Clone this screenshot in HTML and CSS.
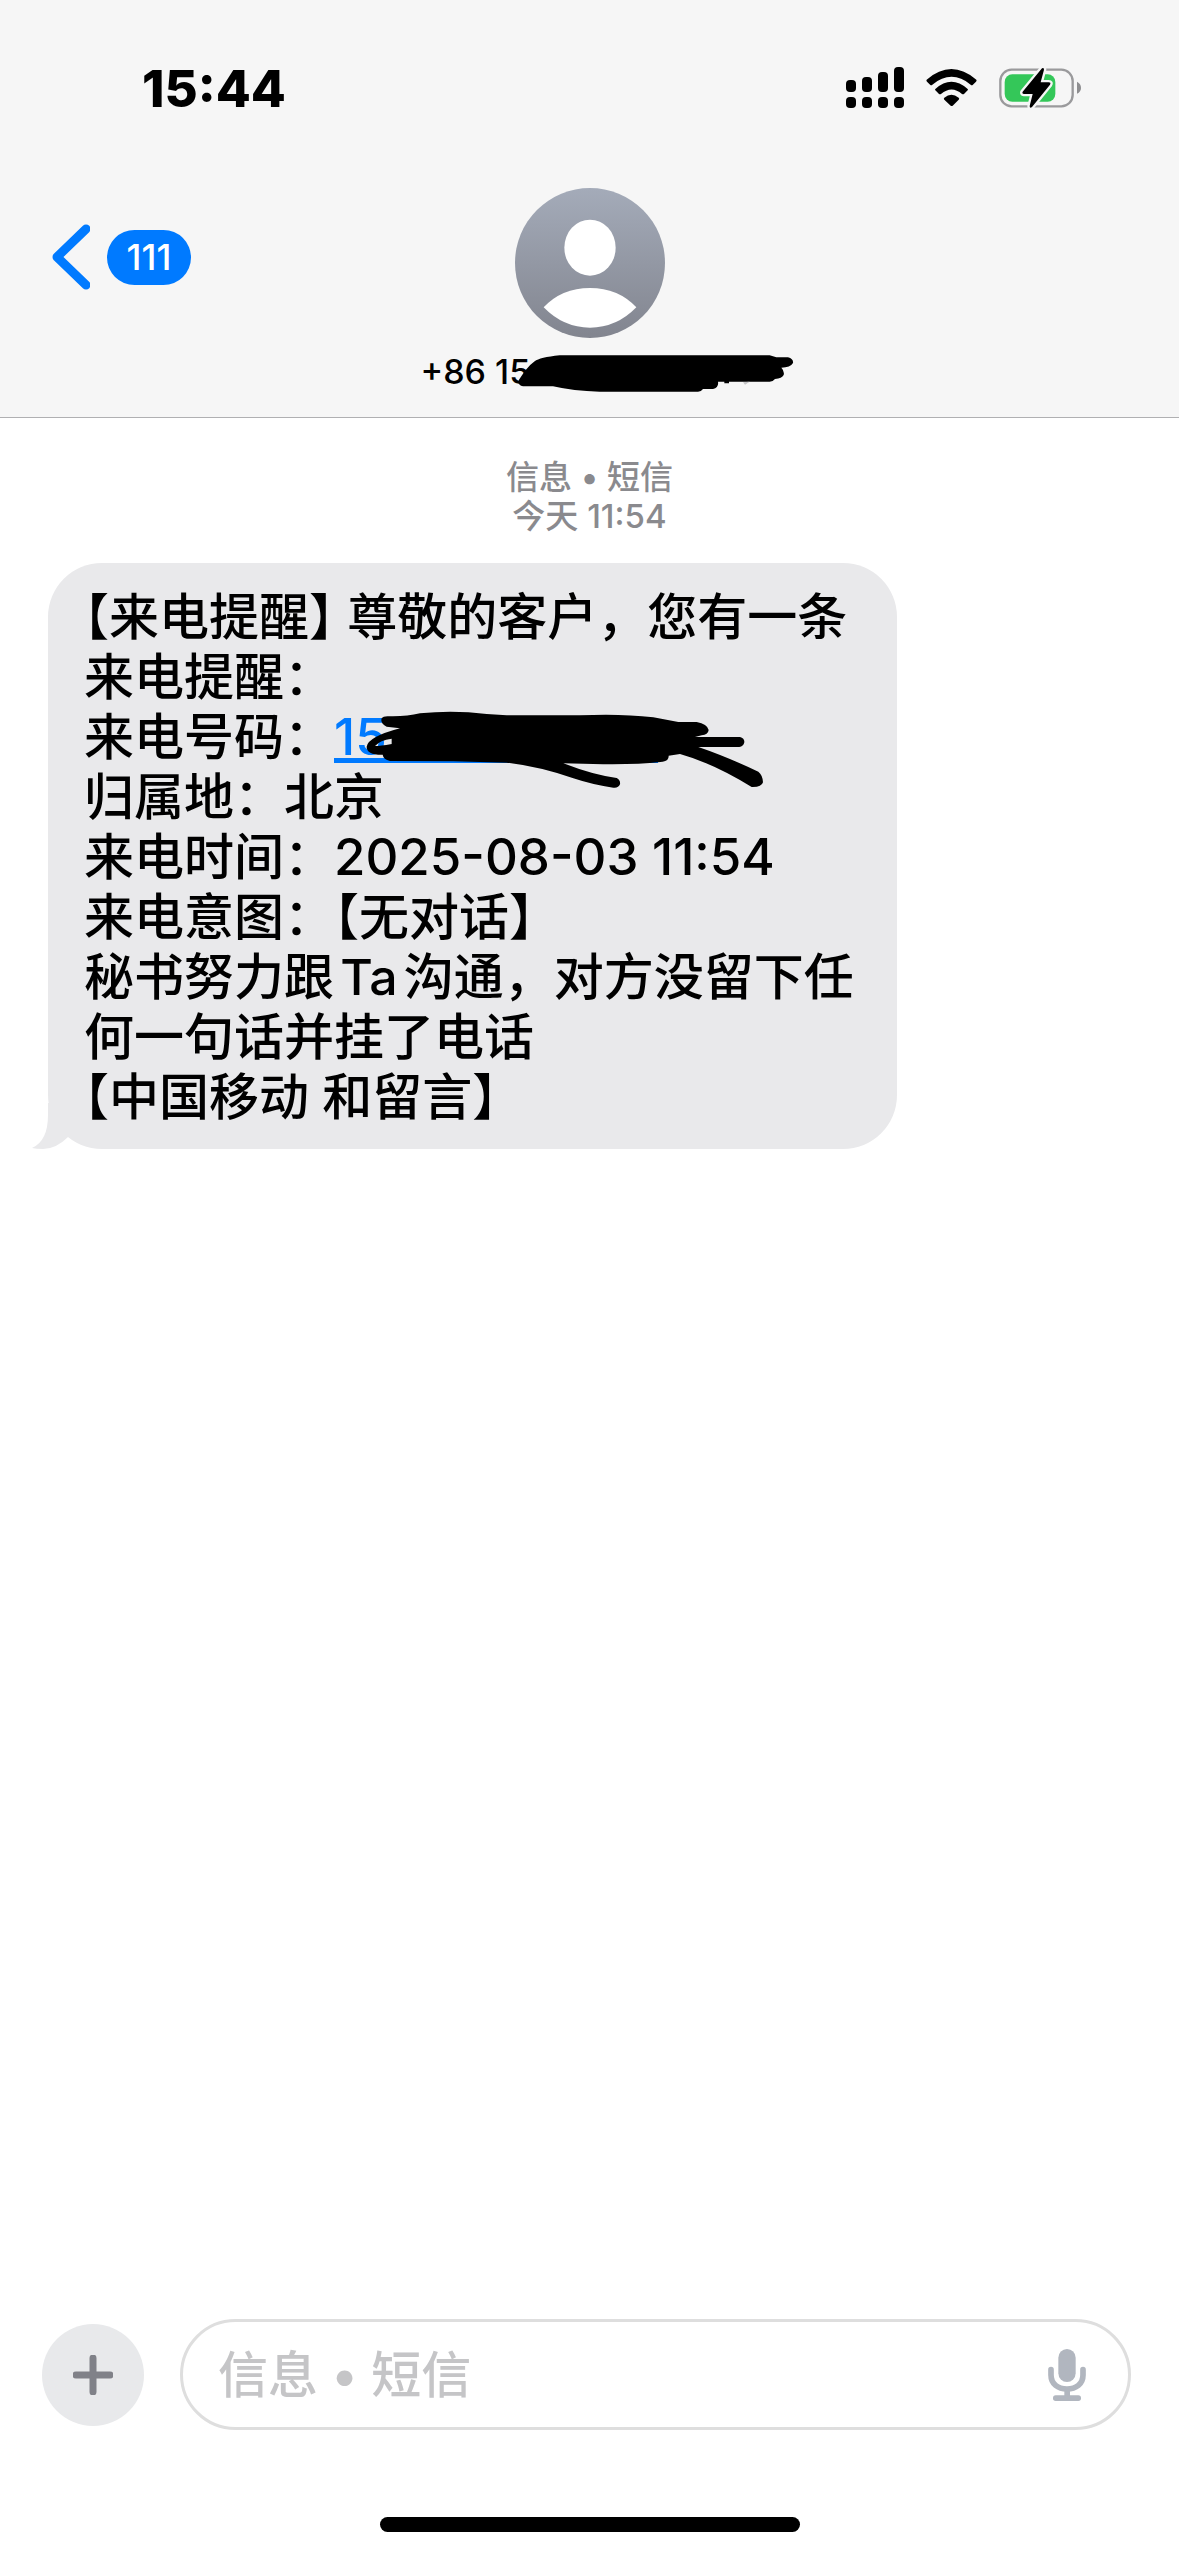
FILE: index.html
```html
<!DOCTYPE html>
<html lang="zh-CN">
<head>
<meta charset="utf-8">
<meta name="viewport" content="width=device-width, initial-scale=1">
<title>信息</title>
<link rel="stylesheet" href="styles.css">
</head>
<body>
<header class="top">
  <div class="status">
    <time class="clock">15:44</time>
    <div class="status-icons">
      <svg width="58" height="42" viewBox="0 0 58 42" aria-hidden="true">
        <rect x="0" y="13" width="10" height="12" rx="4"/><rect x="16" y="10" width="10" height="15" rx="4"/>
        <rect x="32" y="5" width="10" height="20" rx="4"/><rect x="48" y="0" width="10" height="25" rx="4"/>
        <rect x="0" y="30" width="10" height="11" rx="4"/><rect x="16" y="30" width="10" height="11" rx="4"/>
        <rect x="32" y="30" width="10" height="11" rx="4"/><rect x="48" y="30" width="10" height="11" rx="4"/>
      </svg>
      <svg class="wifi" width="51" height="38" viewBox="0 0 153 114" aria-hidden="true">
        <path d="M2 32Q0 35 3 38L13 48Q16 50 19 47Q77 0 134 47Q137 50 140 48L150 38Q153 35 151 32Q76-32 2 32Z"/>
        <path d="M28 60Q26 62 28 64L39 75Q42 77 45 75Q77 48 108 75Q111 77 114 75L125 64Q127 62 125 60Q76 17 28 60Z"/>
        <path d="M55 86Q52 89 55 92L74 110Q77 112 80 110L98 92Q101 89 98 86Q76 68 55 86Z"/>
      </svg>
      <svg width="82" height="42" viewBox="0 0 246 126" aria-hidden="true">
        <rect x="4" y="8" width="217" height="110" rx="34" fill="none" stroke="#9a9a9c" stroke-width="7"/>
        <path d="M234 44Q246 50 246 62Q246 74 234 80Z" fill="#8e8e90"/>
        <rect x="17" y="22" width="152" height="82" rx="23" fill="#34c759"/>
        <path d="M129 4L71 74Q68 80 75 81H101L92 117Q92 125 99 120L153 53Q157 46 149 46H125L135 8Q135 0 129 4Z" stroke="#f6f6f6" stroke-width="14" stroke-linejoin="round"/>
        <path d="M129 4L71 74Q68 80 75 81H101L92 117Q92 125 99 120L153 53Q157 46 149 46H125L135 8Q135 0 129 4Z"/>
      </svg>
    </div>
  </div>
  <nav class="nav">
    <button class="back" type="button" aria-label="返回">
      <svg width="38" height="66" viewBox="0 0 38 66" aria-hidden="true"><path d="M34 5L5 33L34 61" fill="none" stroke="#007aff" stroke-width="9" stroke-linecap="round" stroke-linejoin="round"/></svg>
      <span class="count">111</span>
    </button>
    <div class="contact">
      <svg width="150" height="150" viewBox="0 0 450 450" aria-hidden="true">
        <defs><linearGradient id="shade" x1="0" y1="0" x2="0" y2="1"><stop offset="0" stop-color="#a4abb9"/><stop offset="1" stop-color="#82858f"/></linearGradient></defs>
        <circle cx="225" cy="225" r="225" fill="url(#shade)"/>
        <ellipse cx="225" cy="179" rx="77" ry="84" fill="#fff"/>
        <path d="M86 358Q140 300 225 300T364 358Q305 419 225 419T86 358Z" fill="#fff"/>
      </svg>
      <div class="number">+86 15
        <svg class="number-mark" width="284" height="40" viewBox="340 550 852 120" aria-hidden="true"><path d="M358 630L375 605Q390 585 405 575Q420 563 480 557H1110L1130 563H1165Q1182 568 1180 580Q1172 594 1145 594Q1155 604 1152 616Q1147 627 1126 628Q1120 636 1110 636H988V641H974V636H955Q958 655 940 658H910Q905 666 895 666H600Q520 664 460 650H370Q352 645 358 630Z"/><path d="M1030 638L1050 636L1036 645Z" fill="#c4c4c6"/></svg>
      </div>
    </div>
  </nav>
</header>

<main class="thread">
  <p class="meta">信息 • 短信<br>今天 11:54</p>
  <div class="bubble">
    <svg class="tail" width="36" height="46" viewBox="0 0 36 46" aria-hidden="true"><path d="M16 0V12Q16 38 0 45Q4 46 11 46Q24 46 36 34V0Z"/></svg>
    <p>【来电提醒<span class="half">】</span> 尊敬的客户，您有一条来电提醒：<br>来电号码：<a class="phone latin" href="#">15<svg class="phone-mark" width="400" height="80" viewBox="1035 480 1200 240" aria-hidden="true"><path fill-rule="evenodd" d="M1085 505Q1090 497 1110 499Q1160 500 1200 490Q1300 480 1400 492L1460 496H1680Q1800 490 1900 502L1975 516H2030Q2062 522 2066 540Q2064 555 2045 556L2025 561H2160Q2174 565 2173 577Q2170 590 2158 591H2035Q2120 620 2215 665Q2228 675 2229 697Q2225 712 2195 711Q2080 640 1980 612L1946 617Q1947 632 1928 635Q1850 645 1720 642L1630 640Q1720 675 1790 684Q1802 690 1800 703Q1795 715 1780 713Q1720 705 1660 685Q1560 650 1460 638L1300 634L1110 633Q1090 628 1088 614Q1040 615 1040 590Q1045 560 1140 535L1100 530Q1080 520 1085 505ZM1065 588Q1080 570 1115 566V582Q1080 588 1065 588Z"/></svg></a><br>归属地：北京<br>来电时间：<span class="latin">2025-08-03 11:54</span><br>来电意图：【无对话】<br>秘书努力跟Ta沟通，对方没留下任何一句话并挂了电话<br>【中国移动 和留言】</p>
  </div>
</main>

<footer class="bottom">
  <form class="composer">
    <button class="add" type="button" aria-label="添加">
      <svg width="40" height="40" viewBox="0 0 40 40" aria-hidden="true"><path d="M20 3V37M3 20H37" stroke="#808188" stroke-width="7" stroke-linecap="round"/></svg>
    </button>
    <div class="field">
      <input type="text" placeholder="信息 • 短信" aria-label="信息 • 短信">
      <button class="mic" type="button" aria-label="听写">
        <svg width="38" height="52" viewBox="0 0 114 156" aria-hidden="true"><g fill="#b1b6bf"><rect x="31" y="0" width="52" height="99" rx="26"/><rect x="15" y="139" width="84" height="17" rx="8"/><rect x="49" y="118" width="17" height="30"/></g><path d="M9 62V78C9 105 30 120 57 120S105 105 105 78V62" fill="none" stroke="#b1b6bf" stroke-width="17" stroke-linecap="round"/></svg>
      </button>
    </div>
  </form>
  <div class="home"></div>
</footer>
</body>
</html>
```

FILE: styles.css
```css
* { box-sizing: border-box; }

body {
  margin: 0;
  min-height: 100vh;
  display: flex;
  flex-direction: column;
  background: #fff;
  color: #000;
  font-family: Inter, "Noto Sans CJK SC", sans-serif;
  font-weight: 500;
}

button {
  padding: 0;
  border: 0;
  background: none;
  font: inherit;
  cursor: pointer;
}

svg { display: block; flex: none; }
p { margin: 0; }

.top {
  background: #f6f6f6;
  border-bottom: 1px solid #b0b0b2;
}

.status {
  display: flex;
  align-items: center;
  justify-content: space-between;
  height: 176px;
  padding: 0 98px 0 142px;
}

.clock { font-size: 51px; font-weight: 800; }
.status-icons { display: flex; align-items: center; gap: 22px; }

.nav {
  display: grid;
  grid-template-columns: 1fr auto 1fr;
  align-items: start;
  padding: 12px 52px 25px;
}

.back {
  display: flex;
  align-items: center;
  justify-self: start;
  gap: 17px;
  height: 138px;
}

.count {
  min-width: 84px;
  padding: 0 16px;
  border-radius: 28px;
  background: #007aff;
  color: #fff;
  font-size: 36px;
  line-height: 55px;
  text-align: center;
}

.contact {
  display: flex;
  flex-direction: column;
  align-items: center;
  gap: 14px;
}

.number {
  position: relative;
  width: 338px;
  font-size: 34px;
  line-height: 40px;
}

.number-mark { position: absolute; left: 92px; top: 1px; }

.thread { flex: 1; padding: 40px 48px; }

.meta {
  margin-bottom: 27px;
  color: #8a8a8e;
  font-size: 33px;
  line-height: 39px;
  text-align: center;
}

.bubble {
  position: relative;
  width: 849px;
  max-width: 100%;
  padding: 24px 32px 22px 36px;
  border-radius: 54px;
  background: #e9e9eb;
  font-size: 50px;
  line-height: 60px;
  text-autospace: normal;
  text-spacing-trim: trim-start;
}

.bubble .latin { font-size: 51px; }

.tail { position: absolute; left: -16px; bottom: 0; fill: #e9e9eb; }
.half { font-feature-settings: "halt"; }

.phone {
  position: relative;
  display: inline-block;
  width: 324px;
  height: 60px;
  vertical-align: top;
  background: linear-gradient(#007aff, #007aff) 0 51px / 100% 5px no-repeat;
  color: #007aff;
  text-decoration: none;
}

.phone-mark { position: absolute; left: 31px; top: 3px; }

.bottom { padding-bottom: 24px; }

.composer {
  display: flex;
  align-items: center;
  gap: 36px;
  padding: 0 48px 0 42px;
}

.add {
  display: grid;
  place-items: center;
  width: 102px;
  height: 102px;
  border-radius: 50%;
  background: #e8e9eb;
}

.field {
  flex: 1;
  display: flex;
  align-items: center;
  height: 111px;
  padding: 0 42px 0 35px;
  border: 3px solid #dedede;
  border-radius: 56px;
}

.field input {
  flex: 1;
  min-width: 0;
  padding: 0;
  border: 0;
  outline: 0;
  background: none;
  font: inherit;
  font-size: 50px;
  line-height: 60px;
}

.field input::placeholder { color: #c5c5c7; opacity: 1; }

.home {
  width: 420px;
  height: 15px;
  margin: 87px auto 0;
  border-radius: 8px;
  background: #000;
}
```
